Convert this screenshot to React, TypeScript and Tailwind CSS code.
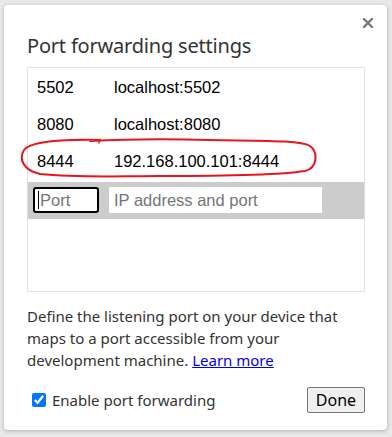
const rows = [
  { port: "5502", target: "localhost:5502" },
  { port: "8080", target: "localhost:8080" },
  { port: "8444", target: "192.168.100.101:8444" },
];

function Scribble() {
  // hand-drawn red ring around the third row
  return (
    <svg
      className="absolute left-[-8px] top-[68px] pointer-events-none"
      width="310"
      height="48"
      viewBox="0 0 310 48"
      fill="none"
    >
      <path
        d="M 80 4 C 40 3, 10 6, 4 14 C -1 22, 2 34, 20 38 C 60 42, 100 40, 140 40 C 200 40, 260 39, 285 35 C 298 32, 298 16, 290 10 C 280 4, 240 5, 190 4 C 150 3, 110 3, 70 5"
        stroke="#e8141b"
        strokeWidth="2"
        strokeLinecap="round"
      />
      <path d="M 76 4 C 78 3, 80 5, 79 7" stroke="#e8141b" strokeWidth="1.5" strokeLinecap="round" />
    </svg>
  );
}

export default function App() {
  return (
    <div className="w-[392px] h-[437px] bg-[#e9e9e9] pt-[5px] pl-[4px] overflow-hidden">
      <div
        className="relative w-[383px] h-[425px] bg-white rounded-[4px] shadow-[0_1px_4px_rgba(0,0,0,0.25)] pl-[23px] pr-[22px] text-[#333]"
        style={{ fontFamily: '"Noto Sans", "Open Sans", sans-serif' }}
      >
        <button className="absolute left-[359px] top-[13px]">
          <svg width="10" height="10" viewBox="0 0 10 10">
            <path d="M 1 1 L 9 9 M 9 1 L 1 9" stroke="#7a7a7a" strokeWidth="2.4" strokeLinecap="square" />
          </svg>
        </button>
        <h1 className="pt-[27px] text-[20px] leading-[28px] text-[#333] tracking-[-0.2px]">
          Port forwarding settings
        </h1>
        <div className="relative mt-[7px] h-[225px] border border-[#e2e2e2]" style={{ fontFamily: '"Liberation Sans", Arial, sans-serif' }}>
          <div className="pt-[0.5px]">
            {rows.map((r) => (
              <div key={r.port} className="flex items-center h-[37px] text-[16.5px] text-black">
                <span className="w-[86px] pl-[9px]">{r.port}</span>
                <span>{r.target}</span>
              </div>
            ))}
          </div>
          <div className="mt-[2px] h-[37px] bg-[#cccccc] flex items-center">
            <div className="ml-[5px] w-[66px] h-[26px] border-2 border-black rounded-[3px] bg-white flex items-center pl-[3px] text-[16.5px] text-[#757575]">
              <span className="w-px h-[18px] bg-black mr-[1px]" />
              Port
            </div>
            <div className="ml-[10px] w-[213px] h-[26px] bg-white flex items-center pl-[5px] text-[16.5px] text-[#757575]">
              IP address and port
            </div>
          </div>
          <Scribble />
        </div>
        <p className="mt-[13px] text-[15px] leading-[22px] text-[#333]">
          Define the listening port on your device that maps to a port accessible from your development machine.{" "}
          <a className="text-[#0000ee] underline">Learn more</a>
        </p>
        <div className="mt-[16px] flex items-center justify-between">
          <label className="flex items-center gap-[6px] pl-[5px] text-[15px] text-[#333]">
            <input type="checkbox" defaultChecked className="w-[14px] h-[14px] accent-[#0075ff] m-0" />
            Enable port forwarding
          </label>
          <button className="w-[58px] h-[26px] border border-[#767676] rounded-[2px] bg-[#efefef] text-[16px] text-black">
            Done
          </button>
        </div>
      </div>
    </div>
  );
}
